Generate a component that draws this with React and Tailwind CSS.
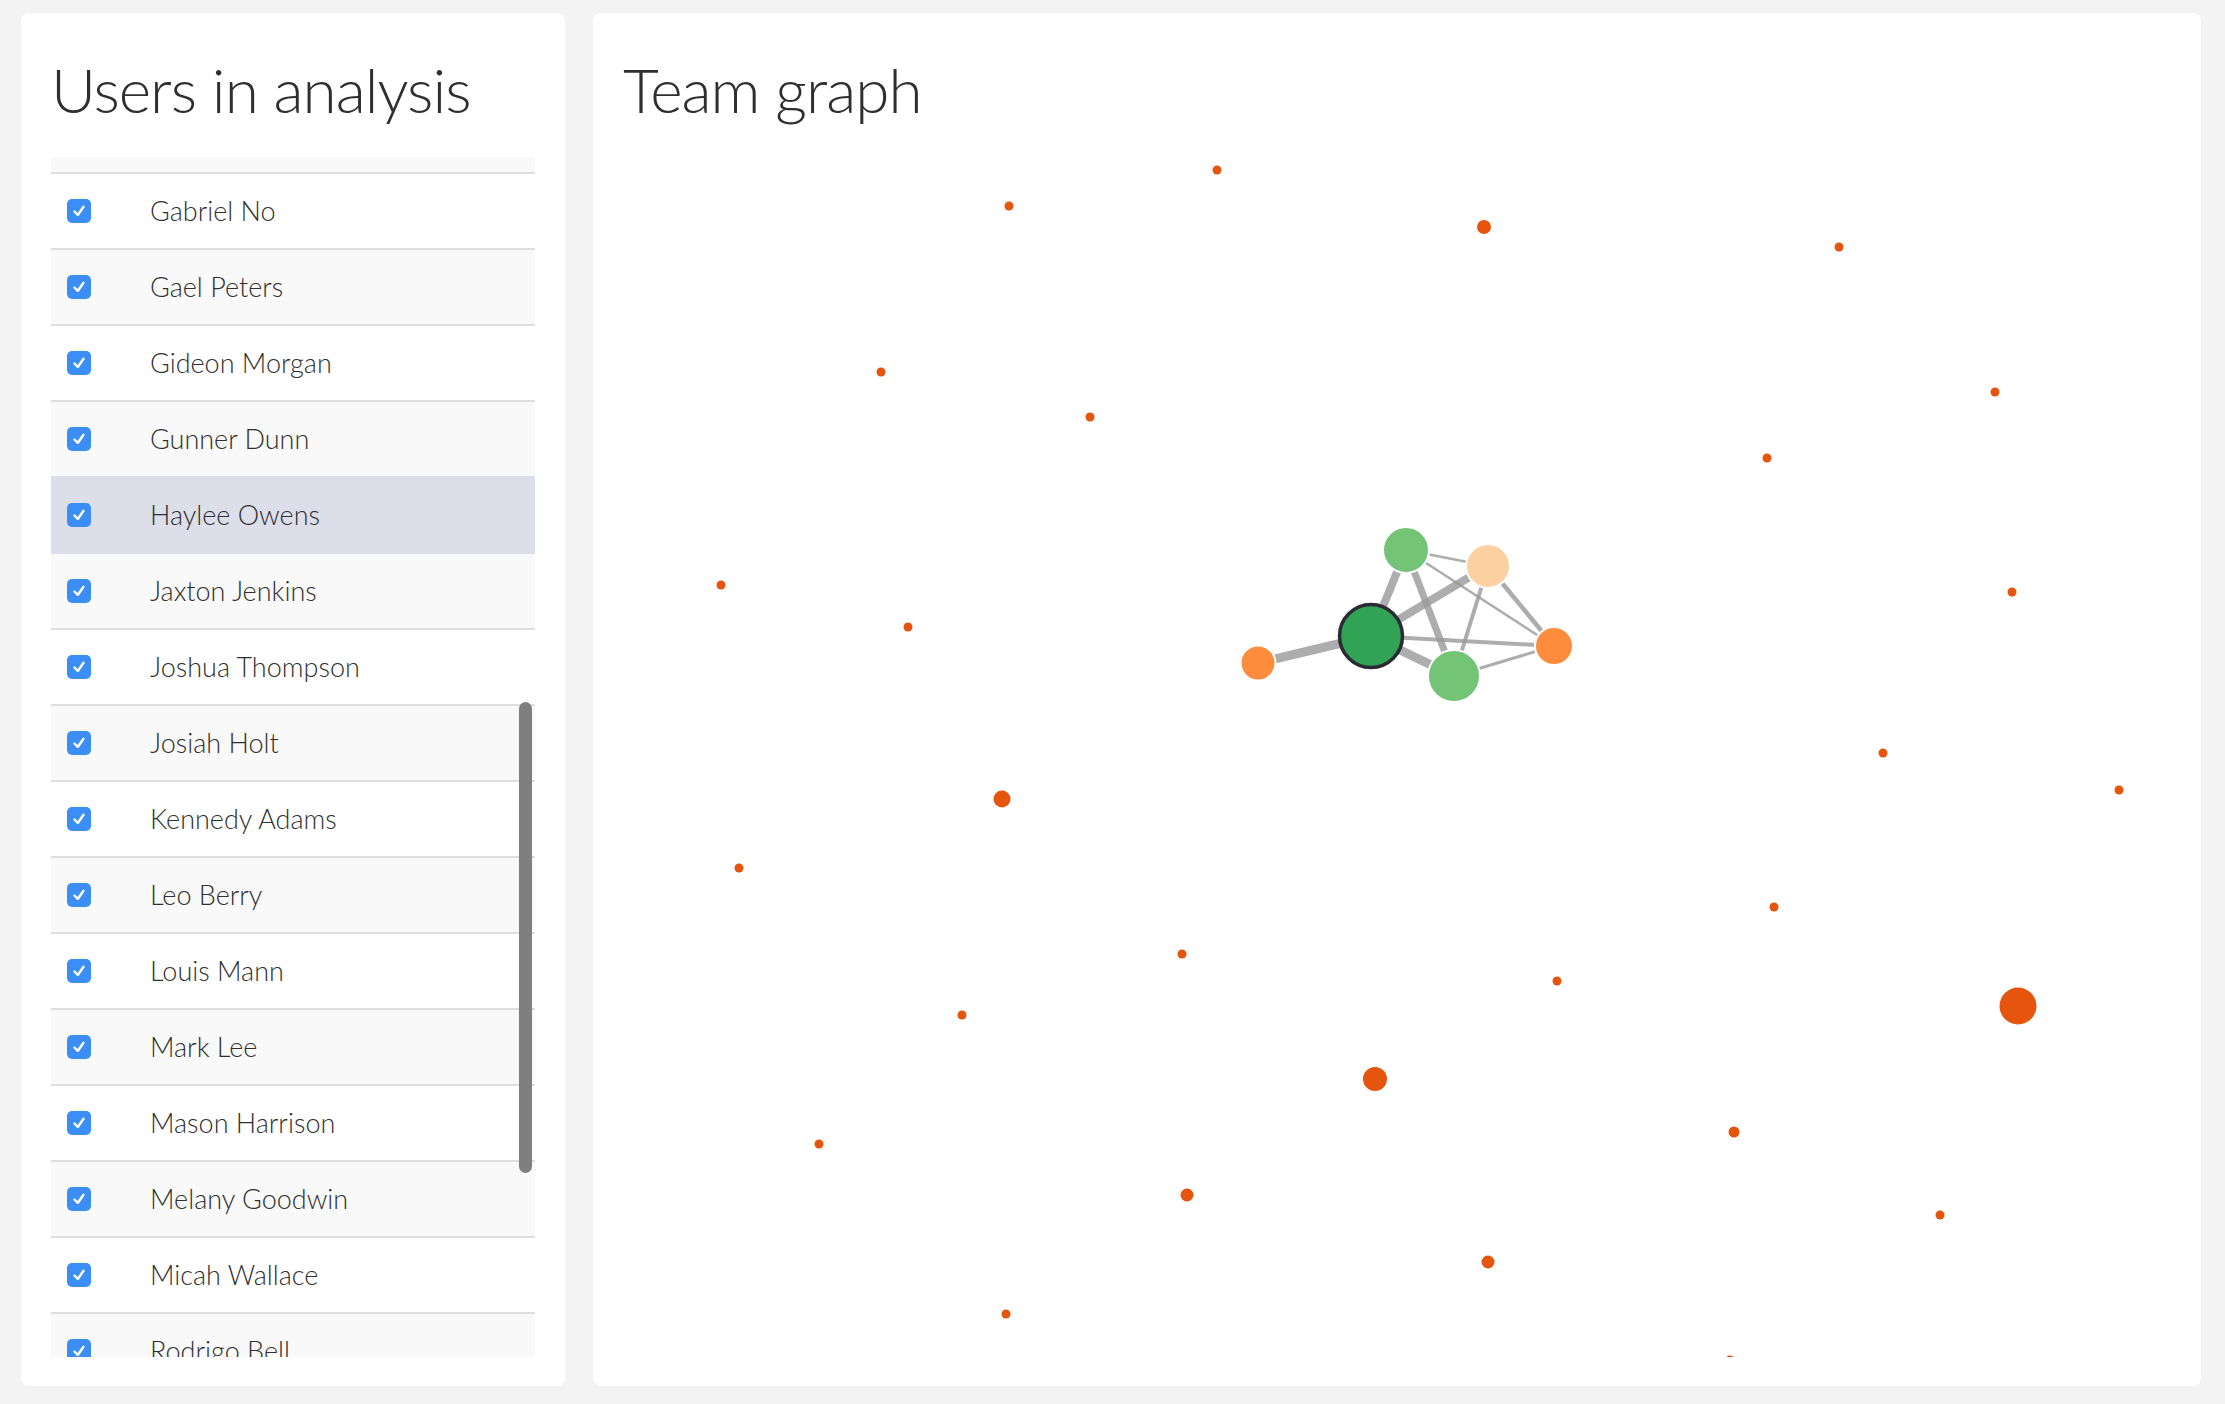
import React from 'react'

const users = [
  'Gabriel No',
  'Gael Peters',
  'Gideon Morgan',
  'Gunner Dunn',
  'Haylee Owens',
  'Jaxton Jenkins',
  'Joshua Thompson',
  'Josiah Holt',
  'Kennedy Adams',
  'Leo Berry',
  'Louis Mann',
  'Mark Lee',
  'Mason Harrison',
  'Melany Goodwin',
  'Micah Wallace',
  'Rodrigo Bell',
]

// graph coords are relative to the svg origin
const dots = [
  [386, 49, 4.5], [594, 13, 4.5], [861, 70, 7], [1216, 90, 4.5],
  [258, 215, 4.5], [467, 260, 4.5], [1372, 235, 4.5], [1144, 301, 4.5],
  [98, 428, 4.5], [285, 470, 4.5], [1389, 435, 4.5], [1260, 596, 4.5],
  [1496, 633, 4.5], [379, 642, 8.5], [116, 711, 4.5], [1151, 750, 4.5],
  [559, 797, 4.5], [934, 824, 4.5], [339, 858, 4.5], [1395, 849, 18.5],
  [752, 922, 12], [196, 987, 4.5], [1111, 975, 5.5], [564, 1038, 6.5],
  [1317, 1058, 4.5], [865, 1105, 6.5], [383, 1157, 4.5], [1107, 1203, 4.5],
]

const nodes = {
  dg: { x: 748, y: 479, r: 33, fill: '#31a354' },
  tg: { x: 783, y: 393, r: 24, fill: '#74c476' },
  pe: { x: 865, y: 409, r: 23, fill: '#fdd0a2' },
  bg: { x: 831, y: 519, r: 27, fill: '#74c476' },
  or: { x: 931, y: 489, r: 20, fill: '#fd8d3c' },
  ol: { x: 635, y: 506, r: 18.5, fill: '#fd8d3c' },
}

const links = [
  ['dg', 'ol', 9], ['dg', 'tg', 8], ['dg', 'pe', 8], ['dg', 'bg', 9],
  ['dg', 'or', 4], ['tg', 'bg', 7], ['tg', 'pe', 2.5], ['tg', 'or', 2.5],
  ['pe', 'or', 4.5], ['pe', 'bg', 4], ['bg', 'or', 3],
]

const Check = () => (
  <div className="w-[24px] h-[24px] rounded-[5px] bg-[#3b8ef6] flex items-center justify-center shrink-0">
    <svg width="16" height="16" viewBox="0 0 16 16">
      <path d="M3.5 8.5 L6.8 12 L12.5 3.8" fill="none" stroke="white" strokeWidth="2.4" strokeLinecap="round" strokeLinejoin="round" />
    </svg>
  </div>
)

const App = () => {
  return (
    <div className="h-screen w-full bg-[#f3f3f3] flex gap-[28px] pl-[21px] pr-[24px] pt-[13px] pb-[18px] text-[#2f2f2f] font-['Lato','Open_Sans',sans-serif]">
      {/* users list */}
      <div className="w-[544px] bg-white rounded-[8px] px-[30px] pt-[45px] pb-[29px] flex flex-col">
        <h1 className="text-[62px] leading-none font-light tracking-[-1px] h-[99px] shrink-0">Users in analysis</h1>
        <div className="relative flex-1 overflow-hidden">
          <div className="h-[15px] bg-[#f9f9f9]"></div>
          {users.map((name, i) => (
            <div
              key={name}
              className={
                'h-[76px] border-t-2 flex items-center text-[27px] font-light ' +
                (name === 'Haylee Owens'
                  ? 'bg-[#dcdeea] border-[#dcdeea]'
                  : name === 'Jaxton Jenkins'
                  ? 'bg-[#f9f9f9] border-[#dcdeea]'
                  : i % 2 === 1
                  ? 'bg-[#f9f9f9] border-[#dedede]'
                  : 'bg-white border-[#dedede]')
              }
            >
              <div className="ml-[16px] mr-[59px]">
                <Check />
              </div>
              <span>{name}</span>
            </div>
          ))}
          <div className="absolute left-[468px] top-[545px] w-[13px] h-[471px] rounded-full bg-[#7f7f7f]"></div>
        </div>
      </div>

      {/* graph */}
      <div className="flex-1 bg-white rounded-[8px] px-[30px] pt-[45px] pb-[29px] flex flex-col">
        <h1 className="text-[62px] leading-none font-light tracking-[-1px] h-[99px] shrink-0">Team graph</h1>
        <div className="flex-1 overflow-hidden">
          <svg width="1548" height="1200" className="block">
            {dots.map(([x, y, r], i) => (
              <circle key={i} cx={x} cy={y} r={r} fill="#e6550d" />
            ))}
            {links.map(([a, b, w], i) => (
              <line
                key={i}
                x1={nodes[a].x}
                y1={nodes[a].y}
                x2={nodes[b].x}
                y2={nodes[b].y}
                stroke="#999"
                strokeOpacity="0.8"
                strokeWidth={w}
              />
            ))}
            {Object.entries(nodes).map(([k, n]) => (
              <circle
                key={k}
                cx={n.x}
                cy={n.y}
                r={k === 'dg' ? n.r - 1.5 : n.r - 1}
                fill={n.fill}
                stroke={k === 'dg' ? '#2b2b35' : '#fff'}
                strokeWidth={k === 'dg' ? 3.5 : 2}
              />
            ))}
          </svg>
        </div>
      </div>
    </div>
  )
}

export default App
